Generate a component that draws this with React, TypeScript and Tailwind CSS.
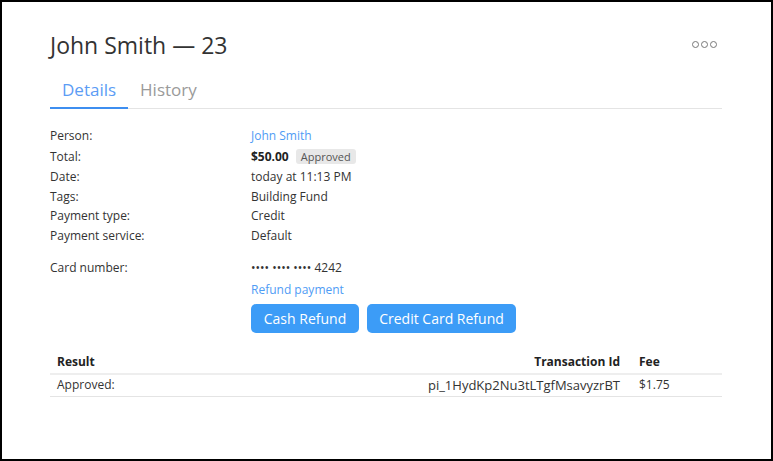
import React from "react";

const rows: [string, React.ReactNode][] = [
  ["Person:", <span className="text-[#4f9cf5]">John Smith</span>],
  [
    "Total:",
    <span className="flex items-center gap-[7px]">
      <span className="font-bold text-[#222]">$50.00</span>
      <span className="bg-[#e8e8e8] rounded-[3px] px-[5px] text-[11px] leading-[15px] text-[#555]">Approved</span>
    </span>,
  ],
  ["Date:", "today at 11:13 PM"],
  ["Tags:", "Building Fund"],
  ["Payment type:", "Credit"],
  ["Payment service:", "Default"],
];

const App = () => {
  return (
    <div className="w-[773px] h-[461px] border-2 border-black bg-white font-['Open_Sans',sans-serif] text-[#333]">
      <div className="pl-[48px] pr-[49px] pt-[26px]">
        <div className="flex items-center justify-between">
          <h1 className="text-[23px] leading-[34px] font-normal text-[#333]">John Smith — 23</h1>
          <div className="flex gap-[2px] mr-[5px] mt-[-2px]">
            <span className="w-[7px] h-[7px] rounded-full border border-[#777]"></span>
            <span className="w-[7px] h-[7px] rounded-full border border-[#777]"></span>
            <span className="w-[7px] h-[7px] rounded-full border border-[#777]"></span>
          </div>
        </div>

        <div className="flex mt-[15px] border-b border-[#e4e4e4]">
          <div className="px-[12px] pb-[4px] text-[17px] leading-[26px] text-[#5b9cf5] border-b-2 border-[#3d8ef0] mb-[-1px]">Details</div>
          <div className="px-[12px] pb-[4px] text-[17px] leading-[26px] text-[#9a9a9a]">History</div>
        </div>

        <div className="mt-[17px] text-[12px]">
          {rows.map(([label, value]) => (
            <div key={label} className={`flex items-center ${label === "Total:" ? "h-[22px]" : "h-[19.5px]"}`}>
              <div className="w-[201px]">{label}</div>
              <div>{value}</div>
            </div>
          ))}
          <div className="flex items-center h-[20px] mt-[12px]">
            <div className="w-[201px]">Card number:</div>
            <div>•••• •••• •••• 4242</div>
          </div>
          <div className="pl-[201px] mt-[2px]">
            <div className="text-[#4f9cf5] leading-[20px]">Refund payment</div>
            <div className="flex gap-[8px] mt-[4px]">
              <button className="bg-[#3c9cf7] text-white text-[14px] rounded-[5px] w-[108px] h-[29px]">Cash Refund</button>
              <button className="bg-[#3c9cf7] text-white text-[14px] rounded-[5px] w-[149px] h-[29px]">Credit Card Refund</button>
            </div>
          </div>
        </div>

        <table className="w-full mt-[19px] text-[12px] border-collapse">
          <thead>
            <tr className="border-b-2 border-[#eeeeee]">
              <th className="text-left font-bold px-[7px] h-[22px] text-[#222]">Result</th>
              <th className="text-right font-bold pl-[7px] pr-[12px] text-[#222]">Transaction Id</th>
              <th className="text-left font-bold px-[7px] w-[90px] text-[#222]">Fee</th>
            </tr>
          </thead>
          <tbody>
            <tr className="border-b border-[#e4e4e4]">
              <td className="px-[7px] h-[23px]">Approved:</td>
              <td className="pl-[7px] pr-[12px] text-right text-[13px]">pi_1HydKp2Nu3tLTgfMsavyzrBT</td>
              <td className="px-[7px]">$1.75</td>
            </tr>
          </tbody>
        </table>
      </div>
    </div>
  );
};

export default App;
